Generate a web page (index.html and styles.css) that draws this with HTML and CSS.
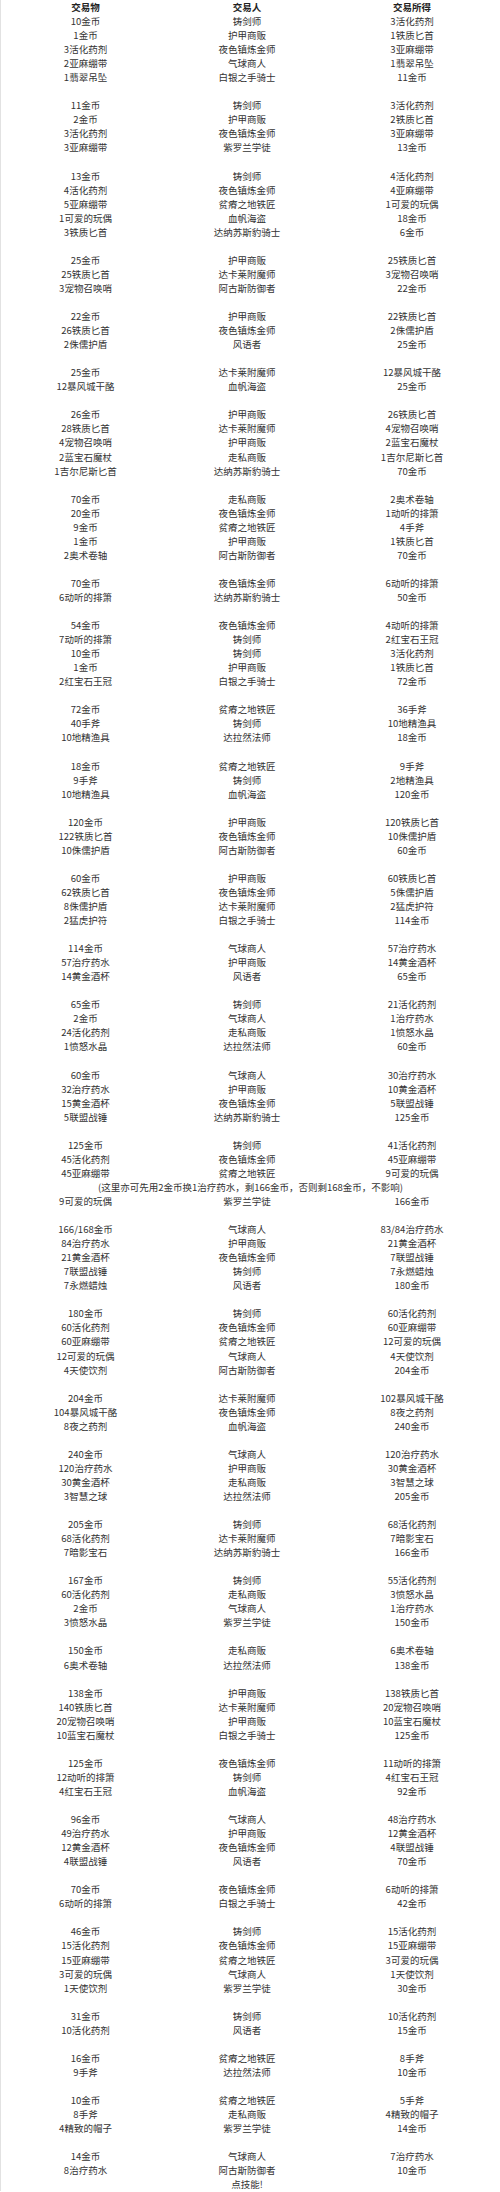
FILE: index.html
```html
<!DOCTYPE html>
<html lang="zh-CN">
<head>
<meta charset="utf-8">
<title>交易表</title>
<link rel="stylesheet" href="styles.css">
</head>
<body>
<div class="table">
  <div class="r head"><span>交易物</span><span>交易人</span><span>交易所得</span></div>

  <div class="g">
    <div class="r"><span>10金币</span><span>铸剑师</span><span>3活化药剂</span></div>
    <div class="r"><span>1金币</span><span>护甲商贩</span><span>1铁质匕首</span></div>
    <div class="r"><span>3活化药剂</span><span>夜色镇炼金师</span><span>3亚麻绷带</span></div>
    <div class="r"><span>2亚麻绷带</span><span>气球商人</span><span>1翡翠吊坠</span></div>
    <div class="r"><span>1翡翠吊坠</span><span>白银之手骑士</span><span>11金币</span></div>
  </div>

  <div class="g">
    <div class="r"><span>11金币</span><span>铸剑师</span><span>3活化药剂</span></div>
    <div class="r"><span>2金币</span><span>护甲商贩</span><span>2铁质匕首</span></div>
    <div class="r"><span>3活化药剂</span><span>夜色镇炼金师</span><span>3亚麻绷带</span></div>
    <div class="r"><span>3亚麻绷带</span><span>紫罗兰学徒</span><span>13金币</span></div>
  </div>

  <div class="g">
    <div class="r"><span>13金币</span><span>铸剑师</span><span>4活化药剂</span></div>
    <div class="r"><span>4活化药剂</span><span>夜色镇炼金师</span><span>4亚麻绷带</span></div>
    <div class="r"><span>5亚麻绷带</span><span>贫瘠之地铁匠</span><span>1可爱的玩偶</span></div>
    <div class="r"><span>1可爱的玩偶</span><span>血帆海盗</span><span>18金币</span></div>
    <div class="r"><span>3铁质匕首</span><span>达纳苏斯豹骑士</span><span>6金币</span></div>
  </div>

  <div class="g">
    <div class="r"><span>25金币</span><span>护甲商贩</span><span>25铁质匕首</span></div>
    <div class="r"><span>25铁质匕首</span><span>达卡莱附魔师</span><span>3宠物召唤哨</span></div>
    <div class="r"><span>3宠物召唤哨</span><span>阿古斯防御者</span><span>22金币</span></div>
  </div>

  <div class="g">
    <div class="r"><span>22金币</span><span>护甲商贩</span><span>22铁质匕首</span></div>
    <div class="r"><span>26铁质匕首</span><span>夜色镇炼金师</span><span>2侏儒护盾</span></div>
    <div class="r"><span>2侏儒护盾</span><span>风语者</span><span>25金币</span></div>
  </div>

  <div class="g">
    <div class="r"><span>25金币</span><span>达卡莱附魔师</span><span>12暴风城干酪</span></div>
    <div class="r"><span>12暴风城干酪</span><span>血帆海盗</span><span>25金币</span></div>
  </div>

  <div class="g">
    <div class="r"><span>26金币</span><span>护甲商贩</span><span>26铁质匕首</span></div>
    <div class="r"><span>28铁质匕首</span><span>达卡莱附魔师</span><span>4宠物召唤哨</span></div>
    <div class="r"><span>4宠物召唤哨</span><span>护甲商贩</span><span>2蓝宝石魔杖</span></div>
    <div class="r"><span>2蓝宝石魔杖</span><span>走私商贩</span><span>1吉尔尼斯匕首</span></div>
    <div class="r"><span>1吉尔尼斯匕首</span><span>达纳苏斯豹骑士</span><span>70金币</span></div>
  </div>

  <div class="g">
    <div class="r"><span>70金币</span><span>走私商贩</span><span>2奥术卷轴</span></div>
    <div class="r"><span>20金币</span><span>夜色镇炼金师</span><span>1动听的排箫</span></div>
    <div class="r"><span>9金币</span><span>贫瘠之地铁匠</span><span>4手斧</span></div>
    <div class="r"><span>1金币</span><span>护甲商贩</span><span>1铁质匕首</span></div>
    <div class="r"><span>2奥术卷轴</span><span>阿古斯防御者</span><span>70金币</span></div>
  </div>

  <div class="g">
    <div class="r"><span>70金币</span><span>夜色镇炼金师</span><span>6动听的排箫</span></div>
    <div class="r"><span>6动听的排箫</span><span>达纳苏斯豹骑士</span><span>50金币</span></div>
  </div>

  <div class="g">
    <div class="r"><span>54金币</span><span>夜色镇炼金师</span><span>4动听的排箫</span></div>
    <div class="r"><span>7动听的排箫</span><span>铸剑师</span><span>2红宝石王冠</span></div>
    <div class="r"><span>10金币</span><span>铸剑师</span><span>3活化药剂</span></div>
    <div class="r"><span>1金币</span><span>护甲商贩</span><span>1铁质匕首</span></div>
    <div class="r"><span>2红宝石王冠</span><span>白银之手骑士</span><span>72金币</span></div>
  </div>

  <div class="g">
    <div class="r"><span>72金币</span><span>贫瘠之地铁匠</span><span>36手斧</span></div>
    <div class="r"><span>40手斧</span><span>铸剑师</span><span>10地精渔具</span></div>
    <div class="r"><span>10地精渔具</span><span>达拉然法师</span><span>18金币</span></div>
  </div>

  <div class="g">
    <div class="r"><span>18金币</span><span>贫瘠之地铁匠</span><span>9手斧</span></div>
    <div class="r"><span>9手斧</span><span>铸剑师</span><span>2地精渔具</span></div>
    <div class="r"><span>10地精渔具</span><span>血帆海盗</span><span>120金币</span></div>
  </div>

  <div class="g">
    <div class="r"><span>120金币</span><span>护甲商贩</span><span>120铁质匕首</span></div>
    <div class="r"><span>122铁质匕首</span><span>夜色镇炼金师</span><span>10侏儒护盾</span></div>
    <div class="r"><span>10侏儒护盾</span><span>阿古斯防御者</span><span>60金币</span></div>
  </div>

  <div class="g">
    <div class="r"><span>60金币</span><span>护甲商贩</span><span>60铁质匕首</span></div>
    <div class="r"><span>62铁质匕首</span><span>夜色镇炼金师</span><span>5侏儒护盾</span></div>
    <div class="r"><span>8侏儒护盾</span><span>达卡莱附魔师</span><span>2猛虎护符</span></div>
    <div class="r"><span>2猛虎护符</span><span>白银之手骑士</span><span>114金币</span></div>
  </div>

  <div class="g">
    <div class="r"><span>114金币</span><span>气球商人</span><span>57治疗药水</span></div>
    <div class="r"><span>57治疗药水</span><span>护甲商贩</span><span>14黄金酒杯</span></div>
    <div class="r"><span>14黄金酒杯</span><span>风语者</span><span>65金币</span></div>
  </div>

  <div class="g">
    <div class="r"><span>65金币</span><span>铸剑师</span><span>21活化药剂</span></div>
    <div class="r"><span>2金币</span><span>气球商人</span><span>1治疗药水</span></div>
    <div class="r"><span>24活化药剂</span><span>走私商贩</span><span>1愤怒水晶</span></div>
    <div class="r"><span>1愤怒水晶</span><span>达拉然法师</span><span>60金币</span></div>
  </div>

  <div class="g">
    <div class="r"><span>60金币</span><span>气球商人</span><span>30治疗药水</span></div>
    <div class="r"><span>32治疗药水</span><span>护甲商贩</span><span>10黄金酒杯</span></div>
    <div class="r"><span>15黄金酒杯</span><span>夜色镇炼金师</span><span>5联盟战锤</span></div>
    <div class="r"><span>5联盟战锤</span><span>达纳苏斯豹骑士</span><span>125金币</span></div>
  </div>

  <div class="g">
    <div class="r"><span>125金币</span><span>铸剑师</span><span>41活化药剂</span></div>
    <div class="r"><span>45活化药剂</span><span>夜色镇炼金师</span><span>45亚麻绷带</span></div>
    <div class="r"><span>45亚麻绷带</span><span>贫瘠之地铁匠</span><span>9可爱的玩偶</span></div>
    <div class="note">(这里亦可先用2金币换1治疗药水，剩166金币，否则剩168金币，不影响)</div>
    <div class="r"><span>9可爱的玩偶</span><span>紫罗兰学徒</span><span>166金币</span></div>
  </div>

  <div class="g">
    <div class="r"><span>166/168金币</span><span>气球商人</span><span>83/84治疗药水</span></div>
    <div class="r"><span>84治疗药水</span><span>护甲商贩</span><span>21黄金酒杯</span></div>
    <div class="r"><span>21黄金酒杯</span><span>夜色镇炼金师</span><span>7联盟战锤</span></div>
    <div class="r"><span>7联盟战锤</span><span>铸剑师</span><span>7永燃蜡烛</span></div>
    <div class="r"><span>7永燃蜡烛</span><span>风语者</span><span>180金币</span></div>
  </div>

  <div class="g">
    <div class="r"><span>180金币</span><span>铸剑师</span><span>60活化药剂</span></div>
    <div class="r"><span>60活化药剂</span><span>夜色镇炼金师</span><span>60亚麻绷带</span></div>
    <div class="r"><span>60亚麻绷带</span><span>贫瘠之地铁匠</span><span>12可爱的玩偶</span></div>
    <div class="r"><span>12可爱的玩偶</span><span>气球商人</span><span>4天使饮剂</span></div>
    <div class="r"><span>4天使饮剂</span><span>阿古斯防御者</span><span>204金币</span></div>
  </div>

  <div class="g">
    <div class="r"><span>204金币</span><span>达卡莱附魔师</span><span>102暴风城干酪</span></div>
    <div class="r"><span>104暴风城干酪</span><span>夜色镇炼金师</span><span>8夜之药剂</span></div>
    <div class="r"><span>8夜之药剂</span><span>血帆海盗</span><span>240金币</span></div>
  </div>

  <div class="g">
    <div class="r"><span>240金币</span><span>气球商人</span><span>120治疗药水</span></div>
    <div class="r"><span>120治疗药水</span><span>护甲商贩</span><span>30黄金酒杯</span></div>
    <div class="r"><span>30黄金酒杯</span><span>走私商贩</span><span>3智慧之球</span></div>
    <div class="r"><span>3智慧之球</span><span>达拉然法师</span><span>205金币</span></div>
  </div>

  <div class="g">
    <div class="r"><span>205金币</span><span>铸剑师</span><span>68活化药剂</span></div>
    <div class="r"><span>68活化药剂</span><span>达卡莱附魔师</span><span>7暗影宝石</span></div>
    <div class="r"><span>7暗影宝石</span><span>达纳苏斯豹骑士</span><span>166金币</span></div>
  </div>

  <div class="g">
    <div class="r"><span>167金币</span><span>铸剑师</span><span>55活化药剂</span></div>
    <div class="r"><span>60活化药剂</span><span>走私商贩</span><span>3愤怒水晶</span></div>
    <div class="r"><span>2金币</span><span>气球商人</span><span>1治疗药水</span></div>
    <div class="r"><span>3愤怒水晶</span><span>紫罗兰学徒</span><span>150金币</span></div>
  </div>

  <div class="g">
    <div class="r"><span>150金币</span><span>走私商贩</span><span>6奥术卷轴</span></div>
    <div class="r"><span>6奥术卷轴</span><span>达拉然法师</span><span>138金币</span></div>
  </div>

  <div class="g">
    <div class="r"><span>138金币</span><span>护甲商贩</span><span>138铁质匕首</span></div>
    <div class="r"><span>140铁质匕首</span><span>达卡莱附魔师</span><span>20宠物召唤哨</span></div>
    <div class="r"><span>20宠物召唤哨</span><span>护甲商贩</span><span>10蓝宝石魔杖</span></div>
    <div class="r"><span>10蓝宝石魔杖</span><span>白银之手骑士</span><span>125金币</span></div>
  </div>

  <div class="g">
    <div class="r"><span>125金币</span><span>夜色镇炼金师</span><span>11动听的排箫</span></div>
    <div class="r"><span>12动听的排箫</span><span>铸剑师</span><span>4红宝石王冠</span></div>
    <div class="r"><span>4红宝石王冠</span><span>血帆海盗</span><span>92金币</span></div>
  </div>

  <div class="g">
    <div class="r"><span>96金币</span><span>气球商人</span><span>48治疗药水</span></div>
    <div class="r"><span>49治疗药水</span><span>护甲商贩</span><span>12黄金酒杯</span></div>
    <div class="r"><span>12黄金酒杯</span><span>夜色镇炼金师</span><span>4联盟战锤</span></div>
    <div class="r"><span>4联盟战锤</span><span>风语者</span><span>70金币</span></div>
  </div>

  <div class="g">
    <div class="r"><span>70金币</span><span>夜色镇炼金师</span><span>6动听的排箫</span></div>
    <div class="r"><span>6动听的排箫</span><span>白银之手骑士</span><span>42金币</span></div>
  </div>

  <div class="g">
    <div class="r"><span>46金币</span><span>铸剑师</span><span>15活化药剂</span></div>
    <div class="r"><span>15活化药剂</span><span>夜色镇炼金师</span><span>15亚麻绷带</span></div>
    <div class="r"><span>15亚麻绷带</span><span>贫瘠之地铁匠</span><span>3可爱的玩偶</span></div>
    <div class="r"><span>3可爱的玩偶</span><span>气球商人</span><span>1天使饮剂</span></div>
    <div class="r"><span>1天使饮剂</span><span>紫罗兰学徒</span><span>30金币</span></div>
  </div>

  <div class="g">
    <div class="r"><span>31金币</span><span>铸剑师</span><span>10活化药剂</span></div>
    <div class="r"><span>10活化药剂</span><span>风语者</span><span>15金币</span></div>
  </div>

  <div class="g">
    <div class="r"><span>16金币</span><span>贫瘠之地铁匠</span><span>8手斧</span></div>
    <div class="r"><span>9手斧</span><span>达拉然法师</span><span>10金币</span></div>
  </div>

  <div class="g">
    <div class="r"><span>10金币</span><span>贫瘠之地铁匠</span><span>5手斧</span></div>
    <div class="r"><span>8手斧</span><span>走私商贩</span><span>4精致的帽子</span></div>
    <div class="r"><span>4精致的帽子</span><span>紫罗兰学徒</span><span>14金币</span></div>
  </div>

  <div class="g">
    <div class="r"><span>14金币</span><span>气球商人</span><span>7治疗药水</span></div>
    <div class="r"><span>8治疗药水</span><span>阿古斯防御者</span><span>10金币</span></div>
    <div class="r"><span></span><span>点技能!</span><span></span></div>
  </div>
</div>
</body>
</html>
```

FILE: styles.css
```css
html, body {
  margin: 0;
  padding: 0;
  background: #ffffff;
}

body {
  width: 500px;
  font-family: "Noto Sans CJK SC", "Noto Sans", sans-serif;
  font-size: 9.5px;
  line-height: 14.05px;
  color: #333333;
}

.table {
  display: flex;
  flex-direction: column;
  gap: 14.05px;
  border-left: 1px solid #e2e2e2;
  box-sizing: border-box;
  width: 500px;
}

.head {
  font-weight: bold;
  color: #222222;
}

.head + .g {
  margin-top: -14.05px;
}

.r {
  display: grid;
  grid-template-columns: 169px 154px 1fr;
  text-align: center;
  white-space: nowrap;
  height: 14.05px;
}

.note {
  text-align: center;
  white-space: nowrap;
  height: 14.05px;
}
```
